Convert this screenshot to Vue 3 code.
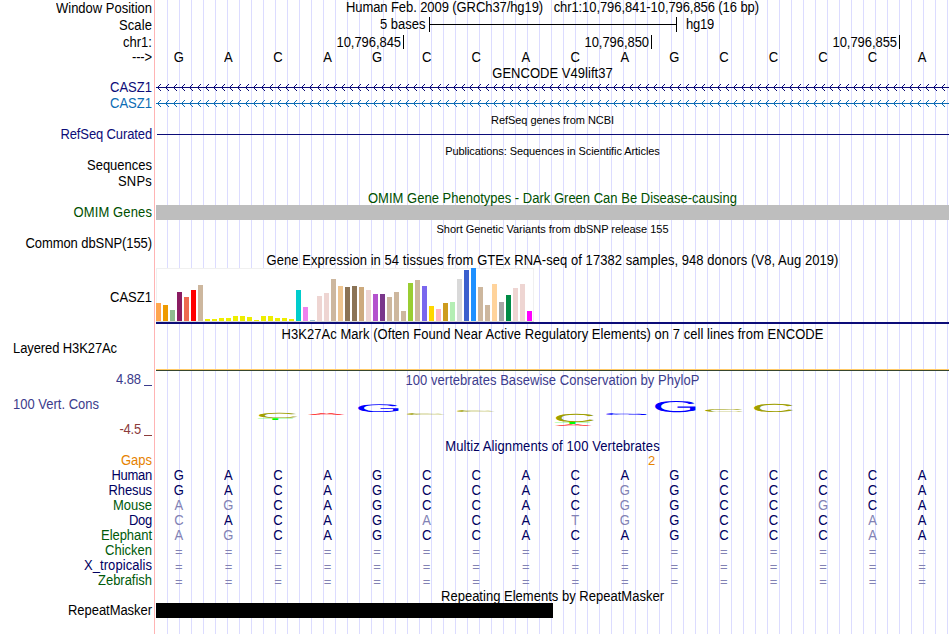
<script setup>
// spreads a text over a fixed width, less 1px of side bearing
const vFit = {
  mounted(el, { value }) {
    const natural = el.getBoundingClientRect().width
    el.style.letterSpacing = (value - 1 - natural) / el.textContent.length + 'px'
  },
}

const reference = 'GACAGCCACAGCCCCA'

const positions = ['10,796,845', '10,796,850', '10,796,855']

const genes = [
  { name: 'CASZ1', tone: 'navy' },
  { name: 'CASZ1', tone: 'blue' },
]

const tissues = [
  ['#ffa54f', 18], ['#ee9a00', 16], ['#8fbc8f', 11], ['#8b1c62', 29], ['#ee6a50', 24],
  ['#ff0000', 31], ['#cdb79e', 36], ['#eeee00', 2], ['#eeee00', 2], ['#eeee00', 3],
  ['#eeee00', 3], ['#eeee00', 5], ['#eeee00', 5], ['#eeee00', 4], ['#eeee00', 1],
  ['#eeee00', 5], ['#eeee00', 5], ['#eeee00', 3], ['#eeee00', 3], ['#eeee00', 2],
  ['#00cdcd', 31], ['#ee82ee', 14], ['#9ac0cd', 1], ['#eed5d2', 25], ['#eed5d2', 28],
  ['#cdb79e', 42], ['#eec591', 35], ['#8b7355', 34], ['#8b7355', 35], ['#cdaa7d', 34],
  ['#eed5d2', 31], ['#b452cd', 27], ['#7a378b', 27], ['#cdb79e', 24], ['#cdb79e', 29],
  ['#cdb79e', 10], ['#9acd32', 38], ['#cdb79e', 41], ['#7a67ee', 35], ['#ffd700', 15],
  ['#ffb6c1', 12], ['#cd9b1d', 18], ['#b4eeb4', 19], ['#d9d9d9', 42], ['#3a5fcd', 51],
  ['#1e90ff', 53], ['#cdb79e', 34], ['#cdb79e', 16], ['#ffd39b', 37], ['#a6a6a6', 19],
  ['#008b45', 26], ['#eed5d2', 33], ['#eed5d2', 37], ['#ff00ff', 10],
]

// ink box of each glyph at font-size 100: left, right, top, bottom
const glyphs = {
  A: { box: [0.3, 66.6, -68.8, 0], color: '#ff0000' },
  C: { box: [5, 68.5, -70, 1], color: '#a0a000' },
  G: { box: [5, 71.5, -70, 1], color: '#0000ff' },
  T: { box: [2.3, 58.8, -68.8, 0], color: '#00ff00' },
}

// base, left, right, top, bottom inside the conservation track
const logo = [
  ['C', 103, 141.5, 42, 47.3],
  ['T', 102, 137, 47, 48.8],
  ['A', 152, 189, 42, 44],
  ['G', 202, 243, 33, 41],
  ['C', 251, 289, 42, 44],
  ['C', 301, 339, 39, 41],
  ['C', 400, 438, 43, 51.3],
  ['T', 399, 434, 51.3, 53.3],
  ['A', 399, 436, 53.3, 55],
  ['G', 450, 491, 42, 44],
  ['G', 499, 540, 30, 41.3],
  ['C', 549, 587, 38, 41],
  ['C', 598, 637, 33, 41.3],
].map(([base, x0, x1, y0, y1]) => {
  const [l, r, t, b] = glyphs[base].box
  const sx = (x1 - x0) / (r - l)
  const sy = (y1 - y0) / (b - t)
  return {
    base,
    color: glyphs[base].color,
    transform: `translate(${x0 - l * sx} ${y1 - b * sy}) scale(${sx} ${sy})`,
  }
})

const species = [
  { name: 'Human', width: 41.5, tone: 'deep', seq: 'GACAGCCACAGCCCCA' },
  { name: 'Rhesus', width: 44.5, tone: 'deep', seq: 'GACAGCCACGGCCCCA' },
  { name: 'Mouse', width: 40, tone: 'green', seq: 'AGCAGCCACGGCCGCA' },
  { name: 'Dog', width: 24, tone: 'deep', seq: 'CACAGACATGGCCCAA' },
  { name: 'Elephant', width: 52, tone: 'green', seq: 'AGCAGCCACAGCCCAA' },
  { name: 'Chicken', width: 48, tone: 'green', seq: '================' },
  { name: 'X_tropicalis', width: 69, tone: 'deep', seq: '================' },
  { name: 'Zebrafish', width: 55, tone: 'green', seq: '================' },
]
</script>

<template>
  <div class="browser">
    <div class="row h17">
      <div class="label low"><span v-fit="97">Window Position</span></div>
      <div class="title"><span v-fit="414">Human Feb. 2009 (GRCh37/hg19)&nbsp;&nbsp; chr1:10,796,841-10,796,856 (16 bp)</span></div>
    </div>
    <div class="row h18">
      <div class="label low"><span v-fit="34">Scale</span></div>
      <div class="track scale">
        <div class="unit"><span v-fit="46.5">5 bases</span></div>
        <div class="ruler"></div>
        <div><span v-fit="29">hg19</span></div>
      </div>
    </div>
    <div class="row h15">
      <div class="label"><span v-fit="30">chr1:</span></div>
      <div class="track positions">
        <div v-for="p in positions" :key="p" class="position"><span v-fit="65.5">{{ p }}</span></div>
      </div>
    </div>
    <div class="row h16">
      <div class="label"><span v-fit="21">---&gt;</span></div>
      <div class="bases plain">
        <span v-for="(b, i) in reference" :key="i">{{ b }}</span>
      </div>
    </div>

    <div class="row h14">
      <div class="label"></div>
      <div class="title"><span v-fit="121.5">GENCODE V49lift37</span></div>
    </div>
    <div v-for="(g, i) in genes" :key="i" class="row h16" :class="g.tone">
      <div class="label"><span v-fit="43">{{ g.name }}</span></div>
      <svg class="track" width="793" height="16">
        <defs>
          <pattern :id="'arrows' + i" width="8" height="16" patternUnits="userSpaceOnUse">
            <path
              d="M1 7h1v1h-1z M2 6h1v1h-1z M2 8h1v1h-1z M3 5h1v1h-1z M3 9h1v1h-1z M4 4h1v1h-1z M4 10h1v1h-1z"
              fill="currentColor"
            />
          </pattern>
        </defs>
        <rect width="793" height="16" :fill="`url(#arrows${i})`" />
        <rect y="7" width="793" height="1" fill="currentColor" />
      </svg>
    </div>

    <div class="row h15">
      <div class="label"></div>
      <div class="title small"><span v-fit="124">RefSeq genes from NCBI</span></div>
    </div>
    <div class="row h16 navy">
      <div class="label"><span v-fit="92.5">RefSeq Curated</span></div>
      <div class="track"><div class="transcript"></div></div>
    </div>

    <div class="row h15">
      <div class="label"></div>
      <div class="title small"><span v-fit="215.5">Publications: Sequences in Scientific Articles</span></div>
    </div>
    <div class="row h16">
      <div class="label"><span v-fit="66">Sequences</span></div>
    </div>
    <div class="row h16">
      <div class="label"><span v-fit="35">SNPs</span></div>
    </div>

    <div class="row h15 omim">
      <div class="label"></div>
      <div class="title low"><span v-fit="370">OMIM Gene Phenotypes - Dark Green Can Be Disease-causing</span></div>
    </div>
    <div class="row h15 omim">
      <div class="label"><span v-fit="79.5">OMIM Genes</span></div>
      <div class="track omim-bar"></div>
    </div>

    <div class="row h16">
      <div class="label"></div>
      <div class="title small low"><span v-fit="233">Short Genetic Variants from dbSNP release 155</span></div>
    </div>
    <div class="row h16">
      <div class="label"><span v-fit="127.5">Common dbSNP(155)</span></div>
    </div>

    <div class="row h16">
      <div class="label"></div>
      <div class="title low"><span v-fit="573">Gene Expression in 54 tissues from GTEx RNA-seq of 17382 samples, 948 donors (V8, Aug 2019)</span></div>
    </div>
    <div class="row gtex">
      <div class="label"><span v-fit="43">CASZ1</span></div>
      <div class="track expression">
        <div class="chart">
          <div
            v-for="([color, height], i) in tissues"
            :key="i"
            class="bar"
            :style="{ height: height + 'px', background: color }"
          ></div>
        </div>
      </div>
    </div>

    <div class="row h3k27">
      <div class="label"><span v-fit="105">Layered H3K27Ac</span></div>
      <div class="title"><span v-fit="543">H3K27Ac Mark (Often Found Near Active Regulatory Elements) on 7 cell lines from ENCODE</span></div>
    </div>

    <div class="row phylop">
      <div class="label cons">
        <div class="limit"><span v-fit="26">4.88</span><i></i></div>
        <div class="name"><span v-fit="87">100 Vert. Cons</span></div>
        <div class="limit min"><span v-fit="22.5">-4.5</span><i></i></div>
      </div>
      <div class="track stack">
        <div class="title"><span v-fit="295">100 vertebrates Basewise Conservation by PhyloP</span></div>
        <svg class="logo" width="793" height="68">
          <text v-for="(l, i) in logo" :key="i" :transform="l.transform" :fill="l.color">{{ l.base }}</text>
        </svg>
      </div>
    </div>

    <div class="row h14 deep">
      <div class="label"></div>
      <div class="title"><span v-fit="215.5">Multiz Alignments of 100 Vertebrates</span></div>
    </div>
    <div class="row h15 gaps">
      <div class="label"><span v-fit="32">Gaps</span></div>
      <div class="track gap-count">2</div>
    </div>
    <div v-for="s in species" :key="s.name" class="row h15" :class="s.tone">
      <div class="label"><span v-fit="s.width">{{ s.name }}</span></div>
      <div class="bases">
        <span v-for="(b, i) in s.seq" :key="i" :class="{ differs: b !== reference[i], gap: b === '=' }">{{ b }}</span>
      </div>
    </div>

    <div class="row h15">
      <div class="label"></div>
      <div class="title low"><span v-fit="224">Repeating Elements by RepeatMasker</span></div>
    </div>
    <div class="row h15">
      <div class="label"><span v-fit="85">RepeatMasker</span></div>
      <div class="track"><div class="repeat"></div></div>
    </div>
  </div>
</template>

<style>
body {
  margin: 0;
  background: #fff;
}
</style>

<style scoped>
.browser {
  width: 949px;
  height: 634px;
  overflow: hidden;
  color: #000;
  font: 13px/16px 'Liberation Sans', Arial, Helvetica, sans-serif;
  background:
    linear-gradient(#ffb4b4, #ffb4b4) 154px 0 / 1px 100% no-repeat,
    repeating-linear-gradient(90deg, #dcdcff 0 1px, transparent 1px 12px) 167px 0 / 782px 100% no-repeat;
}
.row {
  display: flex;
  white-space: nowrap;
}
.h14 { height: 14px; }
.h15 { height: 15px; }
.h16 { height: 16px; }
.h17 { height: 17px; }
.h18 { height: 18px; }
.label {
  flex: none;
  box-sizing: border-box;
  width: 152px;
  margin-right: 4px;
  text-align: right;
}
.label span,
.title span,
.scale span,
.position span {
  display: inline-block;
}
/* slightly tall letters, stretched up from the baseline */
.label span,
.title:not(.small) span,
.scale span,
.position span,
.bases span:not(.gap) {
  transform: scaleY(1.06);
  transform-origin: 0 12px;
}
.low { padding-top: 1px; }
.track,
.title {
  flex: none;
  width: 793px;
}
.title { text-align: center; }
.small { font-size: 11px; }

.navy { color: #0c0c78; }
.blue { color: #0c6cb4; }
.deep { color: #00005f; }
.green { color: #005a0a; }
.omim { color: #005000; }
.gaps { color: #e68200; }

.scale {
  display: flex;
  box-sizing: border-box;
  padding-left: 224px;
}
.unit { flex: none; width: 46px; }
.ruler {
  box-sizing: border-box;
  width: 248px;
  height: 15px;
  margin: 0 9px 0 3px;
  border: solid #000;
  border-width: 0 1px;
  background: linear-gradient(#000, #000) 0 7px / 100% 1px no-repeat;
}
.positions {
  display: grid;
  grid-template-columns: repeat(3, 248px);
}
.position {
  box-sizing: border-box;
  height: 14px;
  padding-right: 2px;
  border-right: 1px solid #000;
  text-align: right;
}

.bases {
  display: grid;
  grid-template-columns: repeat(16, 49.55px);
  margin-left: -1.9px;
  text-align: center;
}
.bases:not(.plain) { color: #00005f; }
.bases .differs { color: #8282b4; }
.bases .gap {
  padding-top: 1px;
  color: #8282b4;
}

.transcript {
  height: 1px;
  margin: 7px 0 0 1px;
  background: #0c0c78;
}
.omim-bar { background: #bebebe; }

.gtex { height: 56px; }
.gtex .label { padding-top: 22px; }
.expression {
  box-sizing: border-box;
  border-bottom: 2px solid #0c0c78;
}
.chart {
  display: flex;
  align-items: flex-end;
  gap: 2px;
  box-sizing: border-box;
  width: 378px;
  height: 54px;
  border-bottom: 1px solid #d8d8d8;
  background: #fff;
  box-shadow: inset 0 1px #f0f0f0, inset -1px 0 #f0f0f0, inset 1px 0 #f0f0f0;
}
.bar {
  flex: none;
  width: 5px;
}

.h3k27 {
  height: 47px;
  background:
    linear-gradient(#ffc864 0 1px, #37462d 1px 2px) 156px 45px / 793px 2px no-repeat;
}
.h3k27 .label {
  padding: 17px 0 0 13px;
  text-align: left;
}
.h3k27 .title { padding-top: 3px; }

.phylop {
  height: 68px;
  color: #3c3c8c;
}
.cons {
  display: flex;
  flex-direction: column;
  gap: 9px;
  padding-top: 1px;
}
.limit {
  display: flex;
  justify-content: flex-end;
  gap: 3px;
}
.limit i {
  width: 8px;
  height: 1px;
  margin: 13px 0 0;
  background: currentColor;
}
.min { color: #8c3c3c; }
.name {
  padding-left: 13px;
  text-align: left;
}
.stack { display: grid; }
.stack > * { grid-area: 1 / 1; }
.stack .title { padding-top: 2px; }
.logo {
  font-size: 100px;
  text-rendering: geometricPrecision;
}

.gap-count {
  box-sizing: border-box;
  padding-left: 492px;
}
.repeat {
  width: 397px;
  height: 15px;
  background: #000;
}
</style>
